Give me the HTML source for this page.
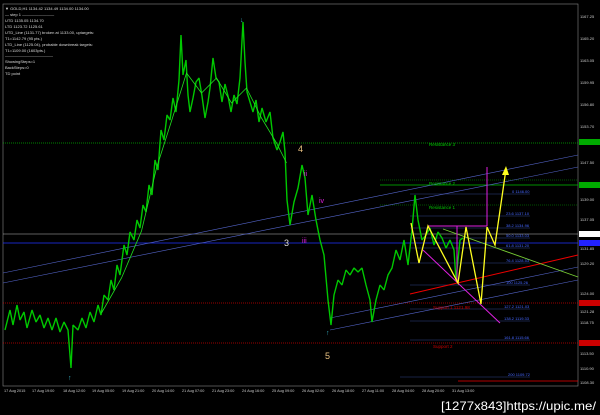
<!DOCTYPE html><html><head><style>
body{margin:0;background:#000;width:600px;height:415px;overflow:hidden;font-family:"Liberation Sans",sans-serif}
svg{position:absolute;left:0;top:0}
.t{font-size:4px;fill:#ddd}
.ax{font-size:4px;fill:#ccc}
.fb{font-size:4px;fill:#4466ff}
</style></head><body>
<svg width="600" height="415" viewBox="0 0 600 415">
<rect x="3" y="4" width="575" height="382" fill="#000" stroke="#888" stroke-width="0.6"/>
<line x1="3" y1="143" x2="578" y2="143" stroke="#00b000" stroke-dasharray="1,1" stroke-width="0.7"/>
<line x1="380" y1="180" x2="578" y2="180" stroke="#00a000" stroke-dasharray="1,1" stroke-width="0.6"/>
<line x1="380" y1="185" x2="578" y2="185" stroke="#00c000" stroke-width="0.8"/>
<line x1="380" y1="205" x2="578" y2="205" stroke="#00a000" stroke-dasharray="1,1" stroke-width="0.6"/>
<line x1="3" y1="234" x2="578" y2="234" stroke="#bbb" stroke-width="0.6"/>
<line x1="3" y1="243" x2="578" y2="243" stroke="#2233ff" stroke-width="0.8"/>
<line x1="3" y1="303" x2="578" y2="303" stroke="#c00" stroke-dasharray="1,1" stroke-width="0.7"/>
<line x1="3" y1="343" x2="578" y2="343" stroke="#c00" stroke-dasharray="1,1" stroke-width="0.7"/>
<g stroke="#334488" stroke-width="0.5">
<line x1="410" y1="194" x2="530" y2="194"/><line x1="410" y1="216" x2="530" y2="216"/><line x1="410" y1="228" x2="530" y2="228"/><line x1="410" y1="238" x2="530" y2="238"/><line x1="410" y1="248" x2="530" y2="248"/><line x1="410" y1="263" x2="530" y2="263"/><line x1="410" y1="285" x2="530" y2="285"/><line x1="410" y1="309" x2="530" y2="309"/><line x1="410" y1="321" x2="530" y2="321"/><line x1="410" y1="340" x2="530" y2="340"/><line x1="400" y1="377" x2="530" y2="377"/>
</g>
<line x1="458" y1="381" x2="578" y2="381" stroke="#e00" stroke-width="0.8"/>
<g stroke="#5566cc" stroke-width="0.6">
<line x1="3" y1="273" x2="578" y2="155"/><line x1="3" y1="283" x2="578" y2="167"/>
<line x1="330" y1="330" x2="578" y2="280"/><line x1="330" y1="318" x2="578" y2="267"/>
</g>
<line x1="410" y1="294" x2="578" y2="255" stroke="#e00" stroke-width="1"/>
<line x1="443" y1="229" x2="578" y2="277" stroke="#7c3" stroke-width="0.9"/>
<polyline fill="none" stroke="#00c800" stroke-width="1.4" stroke-linejoin="bevel" points="5,330 10,310 13,325 17,305 20,320 24,312 27,328 32,310 36,322 40,315 44,328 48,318 52,330 56,318 60,332 64,322 68,330 71,368 73,325 78,330 82,318 86,328 90,312 94,322 98,305 101,315 104,295 108,300 111,280 114,290 117,265 120,275 124,245 127,255 130,232 134,240 137,220 140,228 143,205 146,212 149,185 152,195 155,160 158,170 161,130 164,140 167,115 170,120 173,98 176,112 179,80 181,35 183,75 186,60 188,95 190,112 193,98 196,82 199,78 202,96 205,118 208,102 210,88 213,58 216,78 219,82 222,102 225,84 228,96 231,112 234,95 237,104 240,78 243,22 245,62 247,92 250,102 253,112 256,100 259,122 262,108 266,122 270,112 273,138 277,150 280,142 283,132 285,152 287,200 290,225 294,202 298,188 302,165 305,178 308,215 312,195 316,220 320,240 324,255 328,300 331,325 334,295 338,280 342,285 346,270 350,275 354,268 358,272 362,268 366,285 370,300 372,322 376,300 380,285 384,290 388,275 392,268 396,250 400,260 404,240 408,265 412,230 415,195 418,220 422,240 426,235 430,228 434,245 438,232 442,238 446,248 450,240 454,250 456,280 460,240 463,238"/>
<polyline fill="none" stroke="#20e020" stroke-width="0.8" transform="translate(1.5,3)" points="100,310 120,275 140,228 155,165 170,118 185,70 200,90 215,75 230,100 245,85 260,115 275,140 285,160"/>
<g stroke="#e020e0" stroke-width="1" fill="none">
<line x1="487" y1="167" x2="487" y2="226"/><line x1="428" y1="226" x2="487" y2="226"/><line x1="457" y1="226" x2="457" y2="283"/><line x1="423" y1="250" x2="500" y2="323"/>
</g>
<polyline fill="none" stroke="#ffff20" stroke-width="1.3" points="411,223 419,263 428,226 458,283 466,227 481,304 487,227 495,245 506,169"/>
<polygon points="506,166 502,175 509,175" fill="#ffff20"/>
<text x="298" y="152" font-size="9" fill="#e8c080">4</text>
<text x="284" y="246" font-size="9" fill="#ddd">3</text>
<text x="325" y="359" font-size="9" fill="#e8c080">5</text>
<text x="304" y="176" font-size="7" fill="#e020e0">ii</text>
<text x="319" y="203" font-size="7" fill="#e020e0">iv</text>
<text x="302" y="243" font-size="7" fill="#e020e0">iii</text>
<text x="240" y="22" font-size="7" fill="#3ab">↓</text>
<text x="68" y="380" font-size="7" fill="#3ab">↑</text>
<text x="326" y="335" font-size="7" fill="#3ab">↑</text>
<text x="429" y="146" font-size="4.5" fill="#0c0">Resistance 3</text>
<text x="429" y="185" font-size="4.5" fill="#0c0">Resistance 2</text>
<text x="429" y="209" font-size="4.5" fill="#0c0">Resistance 1</text>
<text x="433" y="309" font-size="4.5" fill="#c00">Support 1 1121.98</text>
<text x="433" y="348" font-size="4.5" fill="#c00">Support 2</text>
<text x="512" y="193" class="fb">0 1146.00</text>
<text x="506" y="215" class="fb">23.6 1137.10</text>
<text x="506" y="227" class="fb">38.2 1134.96</text>
<text x="506" y="237" class="fb">50.0 1133.03</text>
<text x="506" y="247" class="fb">61.8 1131.20</text>
<text x="506" y="262" class="fb">76.4 1128.53</text>
<text x="506" y="284" class="fb">100 1125.26</text>
<text x="504" y="308" class="fb">127.2 1121.03</text>
<text x="504" y="320" class="fb">138.2 1119.33</text>
<text x="504" y="339" class="fb">161.8 1115.66</text>
<text x="508" y="376" class="fb">200 1109.72</text>
<text x="5" y="10" class="t">▼ GOLD,H1  1134.42  1134.49  1134.00  1134.00</text>
<text x="5" y="16" class="t">— step 1 ————————</text>
<text x="5" y="22" class="t">UTD  1135.05  1134.70</text>
<text x="5" y="28" class="t">LTD  1123.72  1125.61</text>
<text x="5" y="34" class="t">UTD_Line (1131.77) broken at 1133.00, uptargets:</text>
<text x="5" y="40" class="t">T1=1142.79 (95 pts.)</text>
<text x="5" y="46" class="t">LTD_Line (1125.04), probable downbreak targets:</text>
<text x="5" y="52" class="t">T1=1109.00 (1603pts.)</text>
<text x="5" y="57" class="t">————————————</text>
<text x="5" y="63" class="t">ShowingSteps=1</text>
<text x="5" y="69" class="t">BackSteps=0</text>
<text x="5" y="75" class="t">TD point</text>
<g class="ax">
<text x="580" y="18">1167.25</text><text x="580" y="40">1165.20</text><text x="580" y="62">1163.05</text><text x="580" y="84">1159.95</text><text x="580" y="106">1156.80</text><text x="580" y="128">1153.70</text><text x="580" y="164">1147.50</text><text x="580" y="201">1139.00</text><text x="580" y="221">1137.05</text><text x="580" y="250">1131.85</text><text x="580" y="265">1129.20</text><text x="580" y="295">1124.00</text><text x="580" y="313">1121.28</text><text x="580" y="324">1118.75</text><text x="580" y="355">1113.50</text><text x="580" y="370">1110.90</text><text x="580" y="384">1108.30</text>
</g>
<rect x="579" y="139" width="21" height="6" fill="#0a0"/>
<rect x="579" y="182" width="21" height="6" fill="#0a0"/>
<rect x="579" y="231" width="21" height="6" fill="#fff"/>
<rect x="579" y="240" width="21" height="6" fill="#22f"/>
<rect x="579" y="300" width="21" height="6" fill="#c00"/>
<rect x="579" y="340" width="21" height="6" fill="#c00"/>
<g style="font-size:3.8px;fill:#ccc">
<text x="4" y="392">17 Aug 2015</text><text x="32" y="392">17 Aug 19:00</text><text x="63" y="392">18 Aug 12:00</text><text x="92" y="392">19 Aug 05:00</text><text x="122" y="392">19 Aug 21:00</text><text x="152" y="392">20 Aug 14:00</text><text x="182" y="392">21 Aug 07:00</text><text x="212" y="392">21 Aug 23:00</text><text x="242" y="392">24 Aug 16:00</text><text x="272" y="392">25 Aug 09:00</text><text x="302" y="392">26 Aug 02:00</text><text x="332" y="392">26 Aug 18:00</text><text x="362" y="392">27 Aug 11:00</text><text x="392" y="392">28 Aug 04:00</text><text x="422" y="392">28 Aug 20:00</text><text x="452" y="392">31 Aug 13:00</text>
</g>
<text x="441" y="410" font-size="12" fill="#fff" font-family="Liberation Sans Narrow,Liberation Sans,sans-serif" textLength="155" lengthAdjust="spacingAndGlyphs">[1277x843]https://upic.me/</text>
</svg>
</body></html>
